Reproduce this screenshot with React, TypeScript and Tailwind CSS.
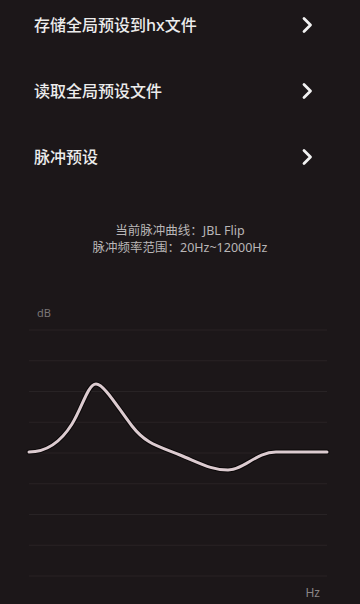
const rows = ["存储全局预设到hx文件", "读取全局预设文件", "脉冲预设"];

const gridYs = Array.from({ length: 9 }, (_, i) => 10 + i * 30.75);

// smooth response curve, coordinates in chart space
const curve =
  "M29 132 C48 132 62 120 72 104 S88 64 96 64 S118 88 132 106 S158 126 180 135 S212 150 228 150 S256 132 276 132 L327 132";

function Chevron() {
  return (
    <svg width="12" height="18" viewBox="0 0 12 18" fill="none">
      <path d="M3 2.5 L9.5 9 L3 15.5" stroke="#f2f2f2" strokeWidth="2.8" strokeLinecap="round" strokeLinejoin="round" />
    </svg>
  );
}

export default function App() {
  return (
    <div
      className="w-[360px] h-[604px] overflow-hidden bg-[#1c1719] text-white"
      style={{ fontFamily: '"Noto Sans", "Noto Sans CJK SC", sans-serif' }}
    >
      <div className="-mt-2">
        {rows.map((label) => (
          <div key={label} className="h-[66px] flex items-center justify-between pl-[34px] pr-[47px]">
            <span className="text-[16px] font-medium text-[#ececec]">{label}</span>
            <Chevron />
          </div>
        ))}
      </div>

      <div className="mt-[32px] flex flex-col items-center text-[12.5px] leading-[17px] text-[#b9b6b7]">
        <p>当前脉冲曲线：JBL Flip</p>
        <p>脉冲频率范围：20Hz~12000Hz</p>
      </div>

      <div className="mt-[50px]">
        <div className="pl-[37px] h-[14px] text-[11px] leading-[14px] text-[#7a7677]">dB</div>
        <svg width="360" height="262" viewBox="0 0 360 262" className="block">
          {gridYs.map((y) => (
            <line key={y} x1="29" x2="327" y1={y} y2={y} stroke="#282325" strokeWidth="1" />
          ))}
          <path d={curve} fill="none" stroke="#0b0809" strokeWidth="5" strokeLinecap="round" />
          <path d={curve} fill="none" stroke="#dccbd0" strokeWidth="3" strokeLinecap="round" />
        </svg>
        <div className="flex justify-end pr-[40px] mt-[4px] text-[12px] leading-[14px] text-[#8a8687]">Hz</div>
      </div>
    </div>
  );
}
